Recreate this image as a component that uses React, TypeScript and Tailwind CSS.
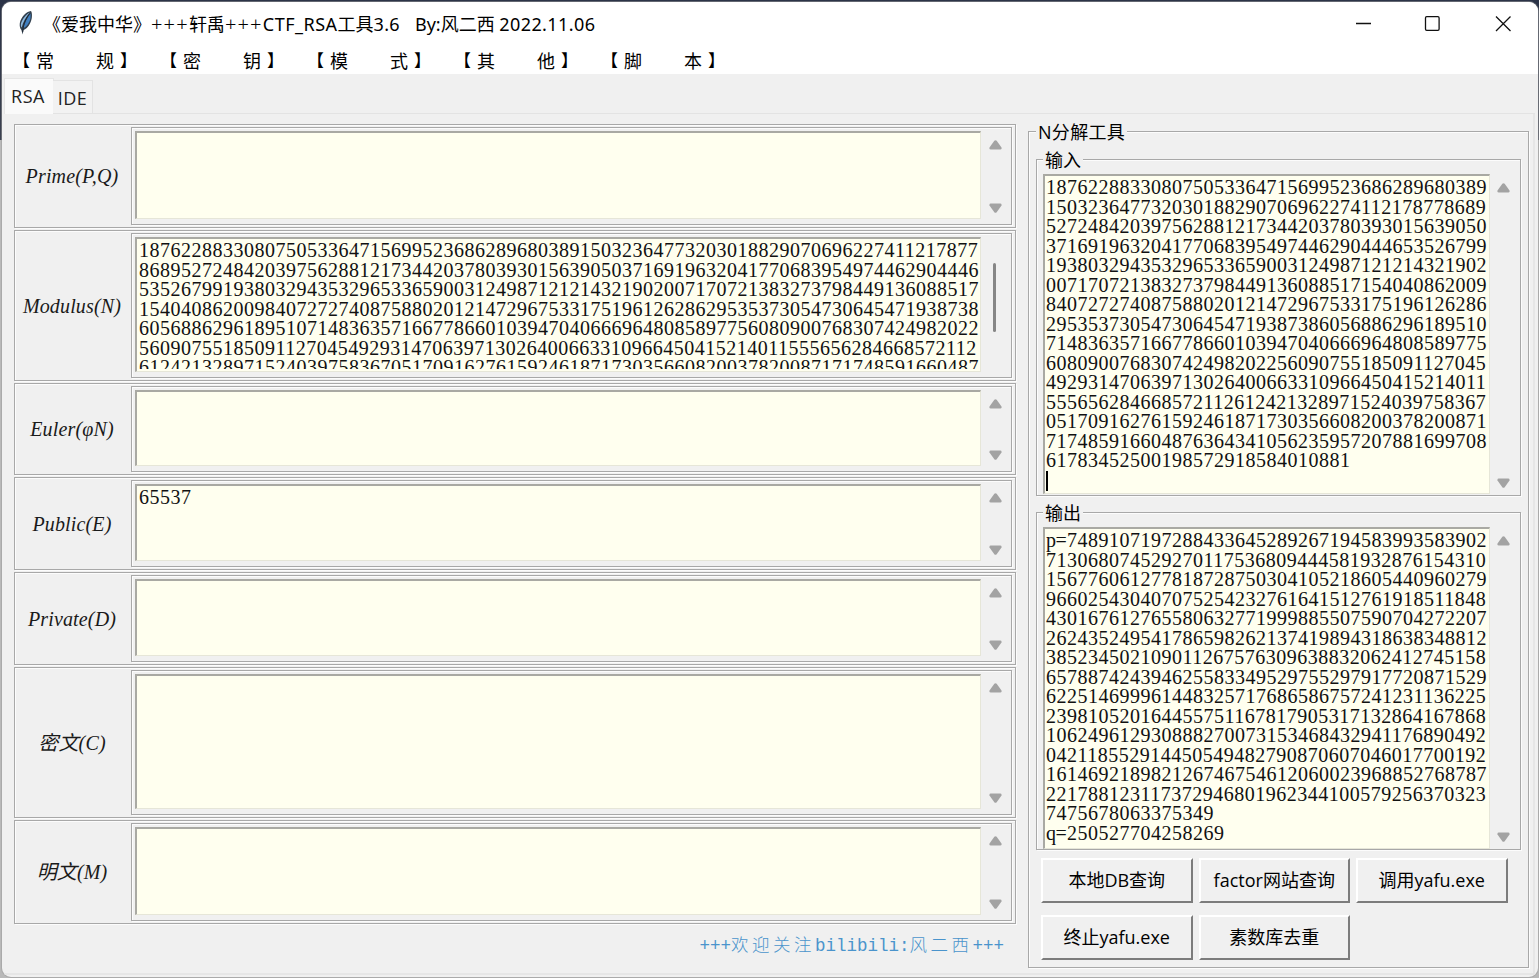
import type { ReactNode } from 'react'

const MODULUS =
    '187622883308075053364715699523686289680389' +
    '150323647732030188290706962274112178778689' +
    '527248420397562881217344203780393015639050' +
    '371691963204177068395497446290444653526799' +
    '193803294353296533659003124987121214321902' +
    '007170721383273798449136088517154040862009' +
    '840727274087588020121472967533175196126286' +
    '295353730547306454719387386056886296189510' +
    '714836357166778660103947040666964808589775' +
    '608090076830742498202256090755185091127045' +
    '492931470639713026400663310966450415214011' +
    '555656284668572112612421328971524039758367' +
    '051709162761592461871730356608200378200871' +
    '717485916604876364341056235957207881699708' +
    '61783452500198572918584010881'

const FACTOR_P =
    'p=7489107197288433645289267194583993583902' +
    '713068074529270117536809444581932876154310' +
    '156776061277818728750304105218605440960279' +
    '966025430407075254232761641512761918511848' +
    '430167612765580632771999885507590704272207' +
    '262435249541786598262137419894318638348812' +
    '385234502109011267576309638832062412745158' +
    '657887424394625583349529755297917720871529' +
    '622514699961448325717686586757241231136225' +
    '239810520164455751167817905317132864167868' +
    '106249612930888270073153468432941176890492' +
    '042118552914450549482790870607046017700192' +
    '161469218982126746754612060023968852768787' +
    '221788123117372946801962344100579256370323' +
    '7475678063375349'

const FACTOR_Q = 'q=250527704258269'

const wrap = (text: string, cols: number) => text.match(new RegExp(`.{1,${cols}}`, 'g')) || []

const groove = 'border border-[#a8a8a8] shadow-[1px_1px_0_#fcfcfc,inset_1px_1px_0_#fcfcfc]'

type Row = { label: string; height: string; lines: string[]; scroll?: boolean }

const rows: Row[] = [
    { label: 'Prime(P,Q)', height: 'h-[104px]', lines: [] },
    { label: 'Modulus(N)', height: 'h-[151px]', lines: wrap(MODULUS, 80).slice(0, 7), scroll: true },
    { label: 'Euler(φN)', height: 'h-[92px]', lines: [] },
    { label: 'Public(E)', height: 'h-[93px]', lines: ['65537'] },
    { label: 'Private(D)', height: 'h-[93px]', lines: [] },
    { label: '密文(C)', height: 'h-[151px]', lines: [] },
    { label: '明文(M)', height: 'h-[104px]', lines: [] },
]

const menus = ['常规', '密钥', '模式', '其他', '脚本']

const Arrow = ({ down }: { down?: boolean }) => (
    <svg width="13" height="10" viewBox="0 0 13 10" className={down ? 'rotate-180' : ''}>
        <path d="M5.3 0.8 Q6.5 -0.4 7.7 0.8 L12.5 7.6 Q12.8 9.5 11.2 9.5 H1.8 Q0.2 9.5 0.5 7.6 Z" fill="#a3a3a3" />
    </svg>
)

const Digits = ({ lines }: { lines: string[] }) => (
    <div className="font-['Liberation_Serif',serif] text-[20px] tracking-[0.5px] leading-[19.5px] text-[#111] whitespace-pre">
        {lines.map((line, i) => (
            <div key={i}>
                {line.includes('=') ? (
                    <>
                        {line[0]}
                        <span className="inline-block w-[10.5px] -indent-px">=</span>
                        {line.slice(2)}
                    </>
                ) : (
                    line
                )}
            </div>
        ))}
    </div>
)

const TextBox = ({ children, className }: { children?: ReactNode; className: string }) => (
    <div
        className={`overflow-hidden bg-[#ffffef] border-t-2 border-l-2 border-r border-b border-t-[#a9a9a3] border-l-[#a9a9a3] border-r-[#e6e6d8] border-b-[#e6e6d8] ${className}`}
    >
        {children}
    </div>
)

const FieldRow = ({ row }: { row: Row }) => (
    <div className={`flex ${row.height} ${groove} pt-[2px] pb-[2px] pr-[3px]`}>
        <div className="w-[116px] flex items-center justify-center pr-[2px] font-['Liberation_Serif','Noto_Sans_CJK_SC',serif] italic text-[20px] tracking-[0.15px] text-[#1a1a1a]">
            {row.label}
        </div>
        <div className={`flex-1 flex ${groove} pt-[3px] pb-[5px] pl-[3px]`}>
            <TextBox className="w-[846px] pl-[2px]">
                <div className="h-[calc(100%-2px)] overflow-hidden pt-[2px]">
                    <Digits lines={row.lines} />
                </div>
            </TextBox>
            <div className="w-[28px] flex flex-col items-center justify-between pt-[9px] pb-[6px]">
                {row.scroll ? (
                    <div className="mt-[17px] mr-px w-[3px] h-[69px] rounded-full bg-[#868686]" />
                ) : (
                    <>
                        <Arrow />
                        <Arrow down />
                    </>
                )}
            </div>
        </div>
    </div>
)

const Group = ({ title, height, children }: { title: string; height: string; children: ReactNode }) => (
    <div className={`relative ${height} ${groove} pt-[14px] pl-[6px] flex`}>
        <span className="absolute left-[6px] -top-[13px] px-[2px] bg-[#f0f0f0] text-[18px] leading-[26px]">{title}</span>
        {children}
        <div className="w-[26px] flex flex-col items-center justify-between pt-[9px] pb-[7px]">
            <Arrow />
            <Arrow down />
        </div>
    </div>
)

const Button = ({ children }: { children: ReactNode }) => (
    <button className="w-[151.5px] h-[45px] bg-[#f0f0f0] border-2 border-t-white border-l-white border-r-[#7c7c7c] border-b-[#7c7c7c] text-[18px]">
        {children}
    </button>
)

const Feather = () => (
    <svg width="16" height="26" viewBox="0 0 16 26" className="mt-[-1px]">
        <path d="M13 1 C8 1.6 3.2 7 1.8 13 C1.4 16 2 18.6 3.4 20 L4.6 24.4 L5.6 20 C9.8 18.4 12.8 13.6 13.8 8 C14.2 5 14 2.4 13 1 Z" fill="#33414f" />
        <path d="M12 2.4 C8.4 4 4.2 9 3 13.6 C2.7 15.6 3 17 3.7 17.6 C5 12 7.6 7 12 2.4 Z" fill="#8db9df" />
        <path d="M12.6 3.4 C9 8 6.4 13 5.2 18.4 C8.8 16.6 11.6 12.6 12.5 8 Z" fill="#3f7fc0" />
        <path d="M11.8 3.4 C8.4 7.6 5.6 13 4.6 22" stroke="#17202b" strokeWidth="0.8" fill="none" />
    </svg>
)

const App = () => {
    return (
        <div className="w-[1539px] h-[978px] overflow-hidden bg-[linear-gradient(#2b3347_0,#3b4150_140px,#b9b9b9_140px,#b9b9b9)] pt-[2px] pl-[2px] pr-px pb-px font-['Open_Sans','Noto_Sans_CJK_SC',sans-serif] text-black">
            <div className="h-full flex flex-col overflow-hidden rounded-[9px] bg-[#f0f0f0] shadow-[0_0_0_1px_#9c9c9c80]">
                {/* Title bar */}
                <div className="h-[43px] shrink-0 bg-white flex items-center pl-[16px]">
                    <Feather />
                    <div className="ml-[9px] flex-1 text-[18px] leading-[24px] whitespace-pre font-['Noto_Sans','Noto_Sans_CJK_SC',sans-serif]">
                        《爱我中华》
                        <span className="text-[20px] font-light tracking-[1.2px]">+++</span>
                        轩禹
                        <span className="text-[20px] font-light tracking-[1.2px]">+++</span>
                        <span className="tracking-[0.5px]">CTF_RSA</span>
                        工具<span className="tracking-[0.3px]">3.6</span>{'   '}
                        <span className="ml-px">By:风二西 </span>
                        <span className="tracking-[0.4px]">2022.11.06</span>
                    </div>
                    <svg width="183" height="43" viewBox="0 0 183 43" fill="none" stroke="#111" strokeWidth="1.3">
                        <path d="M1 21.5H16" />
                        <rect x="70.5" y="14.7" width="13.6" height="13.6" rx="1.2" />
                        <path d="M141 14.5L155.5 29M155.5 14.5L141 29" />
                    </svg>
                </div>

                {/* Menu bar */}
                <div className="h-[29px] shrink-0 bg-white flex pl-[11px] text-[18px] leading-[30px] font-['Noto_Sans_CJK_SC',sans-serif]">
                    {menus.map((menu) => (
                        <div key={menu} className="w-[147px] flex">
                            <span className="w-[23px] text-[17px]">【</span>
                            <span className="w-[60px]">{menu[0]}</span>
                            <span className="w-[24px]">{menu[1]}</span>
                            <span className="text-[17px]">】</span>
                        </div>
                    ))}
                </div>

                {/* Tabs */}
                <div className="h-[40px] shrink-0 flex items-end pl-[2px] text-[18px] text-[#222]">
                    <div className="w-[50px] h-[36px] bg-[#fafafa] border-x border-t border-[#e6e6e6] text-center leading-[34px] tracking-[0.5px] pr-[2px]">RSA</div>
                    <div className="w-[40px] h-[34px] bg-[#f2f2f2] border-r border-t border-b border-[#e3e3e3] text-center leading-[35px] tracking-[0.4px] -ml-px">IDE</div>
                    <div className="flex-1 mr-[3px] border-b border-r border-[#e3e3e3] h-px" />
                </div>

                {/* Notebook page */}
                <div className="flex-1 flex mr-[3px] mb-[2px] border-r-2 border-b-2 border-[#e6e6e6] pl-[12px] pt-[10px]">
                    <div className="w-[1002px] flex flex-col gap-[2px]">
                        {rows.map((row) => (
                            <FieldRow key={row.label} row={row} />
                        ))}
                        <div className="mt-[7px] pr-[12px] flex justify-end items-center h-[26px] text-[#4a94cc] font-['Liberation_Mono','Noto_Sans_CJK_SC',monospace] text-[17.5px]">
                            <span>+++</span>
                            <span className="tracking-[3.5px] font-light">欢迎关注</span>
                            <span>bilibili:</span>
                            <span className="tracking-[3.5px] font-light">风二西</span>
                            <span>+++</span>
                        </div>
                    </div>

                    <div className={`relative ml-[12px] mt-[7px] w-[501px] h-[837px] ${groove} pt-[27px] px-[7px]`}>
                        <span className="absolute left-[7px] -top-[13px] px-[2px] bg-[#f0f0f0] text-[18px] leading-[26px] tracking-[0.3px]">N分解工具</span>
                        <Group title="输入" height="h-[337px]">
                            <TextBox className="w-[447px] pl-px pt-[2px] h-[320px]">
                                <Digits lines={wrap(MODULUS, 42)} />
                                <div className="w-[1.5px] h-[20px] bg-black" />
                            </TextBox>
                        </Group>
                        <div className="mt-[16px]">
                            <Group title="输出" height="h-[338px]">
                                <TextBox className="w-[447px] pl-px pt-[2px] h-[322px]">
                                    <Digits lines={[...wrap(FACTOR_P, 42), FACTOR_Q]} />
                                </TextBox>
                            </Group>
                        </div>
                        <div className="mt-[8px] ml-[5px] flex flex-wrap gap-x-[6px] gap-y-[12px]">
                            <Button>本地DB查询</Button>
                            <Button>factor网站查询</Button>
                            <Button>调用yafu.exe</Button>
                            <Button>终止yafu.exe</Button>
                            <Button>素数库去重</Button>
                        </div>
                    </div>
                </div>
            </div>
        </div>
    )
}

export default App
